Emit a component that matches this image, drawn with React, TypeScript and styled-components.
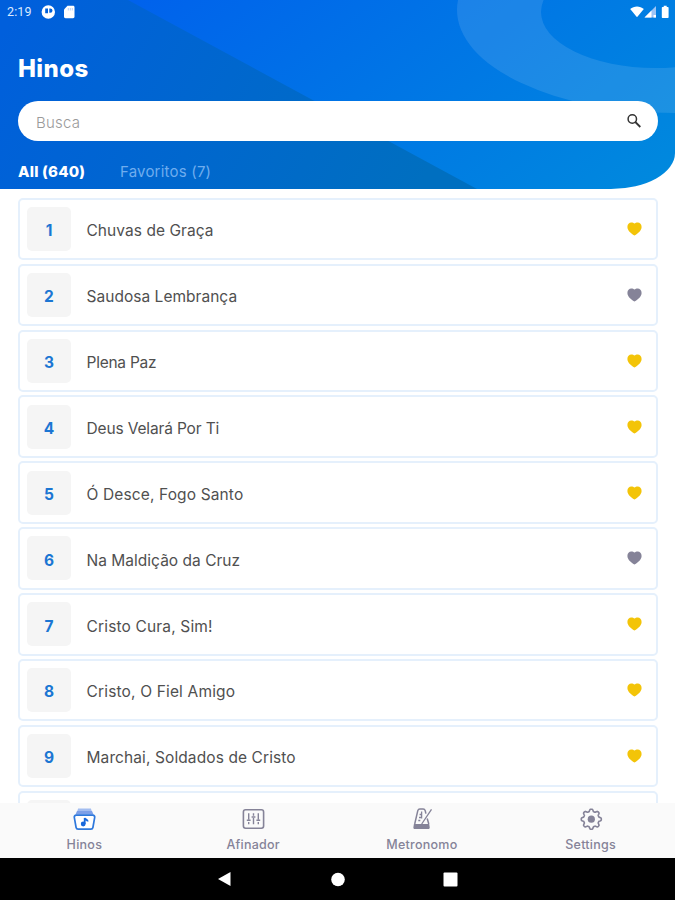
import React from "react";
import styled, { createGlobalStyle } from "styled-components";

const Global = createGlobalStyle`
  * { box-sizing: border-box; }
  html, body { margin: 0; padding: 0; background: #fff; }
  body { font-family: Inter, "Liberation Sans", sans-serif; overflow: hidden; }
`;

const Screen = styled.div`
  width: 675px;
  height: 900px;
  display: flex;
  flex-direction: column;
  background: #fff;
  overflow: hidden;
`;

const Header = styled.header`
  position: relative;
  height: 189px;
  flex: none;
  overflow: hidden;
  border-bottom-right-radius: 64px 36px;
  background: linear-gradient(142deg, #0062ec 15%, #0074e6 52%, #008add 100%);
`;

const Backdrop = styled.svg`
  position: absolute;
  inset: 0;
`;

const HeaderContent = styled.div`
  position: relative;
  display: flex;
  flex-direction: column;
  padding: 0 17px 0 18px;
`;

const StatusBar = styled.div`
  height: 24px;
  margin: 0 -12px 0 -11px;
  padding-bottom: 1px;
  display: flex;
  justify-content: space-between;
  align-items: center;
`;

const StatusGroup = styled.div`
  display: flex;
  align-items: center;
`;

const Clock = styled.span`
  width: 34px;
  color: #dbe9ff;
  font: 400 12.5px/24px Roboto, sans-serif;
  letter-spacing: 0.1px;
`;

const Title = styled.h1`
  margin: 30px 0 0;
  height: 30px;
  font-size: 24px;
  font-weight: 800;
  line-height: 30px;
  color: #fff;
  letter-spacing: 0.4px;
`;

const SearchField = styled.div`
  margin-top: 16.5px;
  height: 40.5px;
  border-radius: 20.5px;
  background: #fff;
  display: flex;
  align-items: center;
  justify-content: space-between;
  padding: 2px 16px 0 18px;
  font-size: 15px;
  font-weight: 300;
  color: #9a9a9a;
`;

const Placeholder = styled.span`
  padding-top: 2px;
  letter-spacing: 0.2px;
`;

const Tabs = styled.div`
  display: flex;
  height: 20px;
  margin-top: 20.5px;
`;

const Tab = styled.span<{ $active?: boolean }>`
  width: 102px;
  white-space: nowrap;
  font-size: 15px;
  line-height: 20px;
  font-weight: ${(p) => (p.$active ? 800 : 400)};
  color: ${(p) => (p.$active ? "#fff" : "#6fadee")};
  letter-spacing: 0.2px;
`;

const List = styled.main`
  height: 614px;
  flex: none;
  overflow: hidden;
  padding: 8.8px 17px 0 18px;
  display: flex;
  flex-direction: column;
  gap: 3.5px;
`;

const Row = styled.div`
  height: 62.4px;
  flex: none;
  border: 2px solid #e5f0fc;
  border-radius: 5px;
  display: flex;
  align-items: center;
  padding: 0 14px 0 7px;
`;

const NumberBox = styled.div`
  width: 44px;
  height: 44px;
  border-radius: 5px;
  background: #f5f5f5;
  display: flex;
  align-items: center;
  justify-content: center;
  padding-top: 3.4px;
  font-size: 15.5px;
  font-weight: 700;
  color: #1b76d3;
`;

const SongName = styled.span<{ $spacing: number }>`
  flex: 1;
  margin-left: 15.5px;
  padding-top: 3.4px;
  font-size: 15.5px;
  font-weight: 400;
  color: #505050;
  letter-spacing: ${(p) => p.$spacing}px;
`;

const HeartIcon = styled.svg<{ $liked: boolean }>`
  fill: ${(p) => (p.$liked ? "#f3c408" : "#858398")};
`;

const TabBar = styled.nav`
  height: 55px;
  flex: none;
  background: #fafafa;
  display: grid;
  grid-template-columns: repeat(4, 1fr);
`;

const TabItem = styled.div`
  display: flex;
  flex-direction: column;
  align-items: center;
  padding-top: 4px;
`;

const TabLabel = styled.span`
  margin-top: 6px;
  font-size: 12.5px;
  line-height: 16px;
  font-weight: 500;
  color: #858398;
  letter-spacing: 0.25px;
`;

const SystemBar = styled.footer`
  height: 42px;
  flex: none;
  background: #000;
  display: flex;
  justify-content: center;
  align-items: center;
`;

const SystemButton = styled.svg`
  width: 113px;
  height: 16px;
  fill: #fff;
`;

const songs: { name: string; liked: boolean; spacing: number }[] = [
  { name: "Chuvas de Graça", liked: true, spacing: 0.05 },
  { name: "Saudosa Lembrança", liked: false, spacing: 0.03 },
  { name: "Plena Paz", liked: true, spacing: -0.25 },
  { name: "Deus Velará Por Ti", liked: true, spacing: -0.15 },
  { name: "Ó Desce, Fogo Santo", liked: true, spacing: 0.13 },
  { name: "Na Maldição da Cruz", liked: false, spacing: 0.02 },
  { name: "Cristo Cura, Sim!", liked: true, spacing: 0.16 },
  { name: "Cristo, O Fiel Amigo", liked: true, spacing: 0.16 },
  { name: "Marchai, Soldados de Cristo", liked: true, spacing: 0.1 },
  { name: "", liked: true, spacing: 0 },
];

const Heart = ({ liked }: { liked: boolean }) => (
  <HeartIcon $liked={liked} width="15" height="14" viewBox="0 0 15 14">
    <path d="M7.5 13.6C5.2 12 .4 9 .4 4.9.4 2.2 2.2.5 4.3.5c1.3 0 2.5.4 3.2 1.1C8.200.9 9.400.5 10.700.5c2.100 0 3.900 1.700 3.900 4.400 0 4.100-4.800 7.100-7.100 8.700z" />
  </HeartIcon>
);

const HymnsIcon = () => (
  <svg width="24" height="24" viewBox="0 0 24 24" fill="none">
    <path d="M6.100 1.600h12.800l1 3H5.100z" fill="#a3bdf0" />
    <path d="M3.500 7.600 5 4h15l1.500 3.600z" fill="#7c9fe8" />
    <path d="M4.200 8.200h16.600c1.300 0 2.100 1 1.900 2.200l-1.800 10.100c-.2 1-1 1.700-2 1.700H6.100c-1 0-1.800-.7-2-1.700L2.300 10.400c-.2-1.200.6-2.200 1.900-2.200z" stroke="#2e78dc" strokeWidth="1.700" fill="#fff" />
    <path d="M12.700 17v-6c.6 1.800 3 1.600 3 3.600" stroke="#1768dc" strokeWidth="1.800" />
    <circle cx="11.200" cy="17" r="2.400" fill="#1768dc" />
  </svg>
);

const TunerIcon = () => (
  <svg width="24" height="24" viewBox="0 0 24 24" fill="none" stroke="#858398">
    <rect x="2.400" y="2.800" width="20.200" height="18.400" rx="2.200" strokeWidth="1.600" />
    <path d="M7.700 6.300v6.500M7.700 15v2.300M12.500 6.300v2.500M12.500 11v6.300M17.300 6.300v6.500M17.300 15v2.300" strokeWidth="1.400" />
    <path d="M5.800 13.300h3.800M10.600 10h3.800M15.400 13.300h3.800" strokeWidth="1.500" />
  </svg>
);

const MetronomeIcon = () => (
  <svg width="24" height="24" viewBox="0 0 24 24" fill="none" stroke="#858398">
    <path d="M4.700 17 7.800 3.600C8.100 2.500 8.900 2 9.900 2h3.200c1 0 1.800.5 2.100 1.600l.7 3M17.200 11.500l1.600 5.500" strokeWidth="1.500" />
    <path d="M3.900 17h15.300l.5 3.200c.2 1-.4 1.800-1.400 1.800H4.800c-1 0-1.600-.8-1.400-1.800z" fill="#858398" stroke="none" />
    <path d="M11.700 17 21.500 2.300M11.600 4.500v7M9.600 7.500h1.500M9 10.500h2M8.300 13.500h2" strokeWidth="1.300" />
  </svg>
);

const gearPath = (() => {
  const points: string[] = [];
  for (let i = 0; i < 96; i++) {
    const a = (i / 96) * Math.PI * 2;
    const r = 8.900 + 1.150 * Math.tanh(2.200 * Math.cos(a * 8));
    points.push(`${(12.3 + r * Math.sin(a)).toFixed(2)} ${(12.2 - r * Math.cos(a)).toFixed(2)}`);
  }
  return `M${points.join("L")}Z`;
})();

const SettingsIcon = () => (
  <svg width="24" height="24" viewBox="0 0 24 24" fill="none" stroke="#858398">
    <path d={gearPath} strokeWidth="1.600" strokeLinejoin="round" />
    <circle cx="12.300" cy="12.200" r="3.600" fill="#858398" stroke="none" />
  </svg>
);

export default function App() {
  return (
    <Screen>
      <Global />
      <Header>
        <Backdrop width="675" height="189" viewBox="0 0 675 189">
          <defs>
            <linearGradient id="wedge" gradientUnits="userSpaceOnUse" x1="20" y1="0" x2="400" y2="220">
              <stop offset="0" stopColor="#005fdc" />
              <stop offset="1" stopColor="#006fc0" />
            </linearGradient>
          </defs>
          <path d="M0 0H128L477 189H0Z" fill="url(#wedge)" />
          <path
            fillRule="evenodd"
            fill="#fff"
            fillOpacity="0.11"
            d="M457 10a218 103 0 0 0 436 0a218 103 0 0 0 -436 0ZM541 12a114 56 0 0 0 228 0a114 56 0 0 0 -228 0Z"
          />
        </Backdrop>
        <HeaderContent>
          <StatusBar>
            <StatusGroup>
              <Clock>2:19</Clock>
              <svg width="34" height="14" viewBox="0 0 34 14">
                <path
                  fill="#fff"
                  fillRule="evenodd"
                  d="M7.300.3a6.700 6.700 0 1 0 0 13.400a6.700 6.700 0 1 0 0-13.400ZM4.200 3.400H7V8.200H4.200ZM8.300 3.400H9.300a2.200 2.200 0 0 1 0 4.400H8.300Z"
                />
                <path fill="#fff" d="M26.500.8H32c.9 0 1.500.6 1.500 1.400v9.600c0 .8-.6 1.400-1.500 1.400h-7.500c-.9 0-1.500-.6-1.500-1.400V4.500z" />
                <path stroke="#b9d3fa" d="M27.300 3v2.500M29.300 3v2.500M31.300 3v2.500" />
              </svg>
            </StatusGroup>
            <svg width="40" height="14" viewBox="0 0 40 14">
              <path fill="#fff" d="M.2 4C4 .5 10 .5 13.800 4L7 12.300z" />
              <path fill="#9dc4f5" d="M26 1V12.500H14.500z" />
              <path fill="#fff" d="M21.500 5.500v7h-7zM23.500 10H26v2.500h-2.500z" />
              <path fill="#fff" d="M33.700.8h3V2h1.200c.4 0 .7.3.7.7v9.600c0 .4-.3.700-.7.700h-5.400c-.4 0-.7-.3-.7-.7V2.700c0-.4.3-.7.7-.7h1.200z" />
            </svg>
          </StatusBar>
          <Title>Hinos</Title>
          <SearchField>
            <Placeholder>Busca</Placeholder>
            <svg width="16" height="18" viewBox="0 0 16 18" fill="none" stroke="#333">
              <circle cx="6.300" cy="6" r="4.200" strokeWidth="1.500" />
              <path d="M9.300 9l5 5" strokeWidth="1.800" />
            </svg>
          </SearchField>
          <Tabs>
            <Tab $active>All (640)</Tab>
            <Tab>Favoritos (7)</Tab>
          </Tabs>
        </HeaderContent>
      </Header>
      <List>
        {songs.map((song, i) => (
          <Row key={i}>
            <NumberBox>{song.name ? i + 1 : ""}</NumberBox>
            <SongName $spacing={song.spacing}>{song.name}</SongName>
            <Heart liked={song.liked} />
          </Row>
        ))}
      </List>
      <TabBar>
        <TabItem><HymnsIcon /><TabLabel>Hinos</TabLabel></TabItem>
        <TabItem><TunerIcon /><TabLabel>Afinador</TabLabel></TabItem>
        <TabItem><MetronomeIcon /><TabLabel>Metronomo</TabLabel></TabItem>
        <TabItem><SettingsIcon /><TabLabel>Settings</TabLabel></TabItem>
      </TabBar>
      <SystemBar>
        <SystemButton viewBox="0 0 113 16"><path d="M62.500 1v14L50 8z" /></SystemButton>
        <SystemButton viewBox="0 0 113 16"><circle cx="57" cy="8.500" r="6.800" /></SystemButton>
        <SystemButton viewBox="0 0 113 16"><rect x="49.500" y="1.500" width="14" height="14" rx="1" /></SystemButton>
      </SystemBar>
    </Screen>
  );
}
